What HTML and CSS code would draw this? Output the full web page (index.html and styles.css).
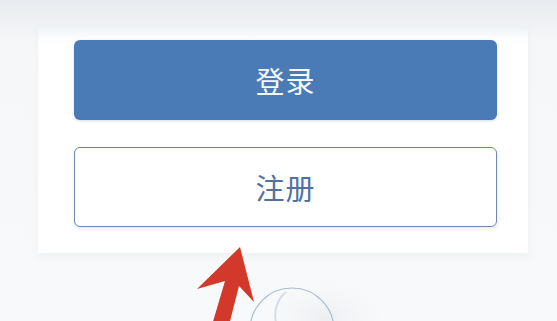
FILE: index.html
```html
<!DOCTYPE html>
<html lang="zh-CN">
<head>
<meta charset="utf-8">
<title>登录</title>
<link rel="stylesheet" href="styles.css">
</head>
<body>
<div class="page">
  <div class="card">
    <button class="btn btn-primary">登录</button>
    <button class="btn btn-outline">注册</button>
  </div>
  <svg class="overlay" width="200" height="90" viewBox="180 240 200 90" aria-hidden="true">
    <defs>
      <radialGradient id="glow" cx="0.5" cy="0.5" r="0.5">
        <stop offset="0" stop-color="#eceef2"/>
        <stop offset="1" stop-color="#f6f7f9" stop-opacity="0"/>
      </radialGradient>
    </defs>
    <ellipse cx="325" cy="318" rx="65" ry="40" fill="url(#glow)"/>
    <circle cx="292" cy="330" r="42" fill="none" stroke="#a9bccd" stroke-width="1.2"/>
    <path d="M286 292 A30 30 0 0 0 276 322" fill="none" stroke="#d6dce3" stroke-width="2"/>
    <polygon points="240,247 254,302 239,286 229,325 212,325 225,281 197,289" fill="#d2392b"/>
  </svg>
</div>
</body>
</html>
```
FILE: styles.css
```css
html, body {
  margin: 0;
  padding: 0;
}
body {
  width: 557px;
  height: 321px;
  overflow: hidden;
  background: linear-gradient(#e8ebef 0, #eef0f3 20px, #f6f7f9 40px, #f8f9fa 100%);
  font-family: "Noto Sans CJK SC", "Noto Sans", sans-serif;
}
.page {
  position: relative;
  width: 557px;
  height: 321px;
  padding-top: 26px;
  box-sizing: border-box;
}
.card {
  margin-left: 38px;
  width: 490px;
  box-sizing: border-box;
  padding: 14px 31px 26px 36px;
  background: linear-gradient(#eef1f4 0, #fbfcfd 12px, #ffffff 20px);
  box-shadow: 0 3px 8px rgba(120, 135, 155, 0.08);
  display: flex;
  flex-direction: column;
  gap: 27px;
}
.btn {
  display: flex;
  align-items: center;
  justify-content: center;
  width: 423px;
  height: 80px;
  box-sizing: border-box;
  border-radius: 6px;
  font-family: "Noto Sans CJK SC", "Noto Sans", sans-serif;
  font-size: 29px;
  font-weight: 400;
  letter-spacing: 1px;
  padding: 0;
}
.btn-primary {
  background: #4a7bb6;
  color: #f4f7fb;
  border: none;
  box-shadow: 0 1px 3px rgba(60, 90, 130, 0.22);
}
.btn-outline {
  background: #ffffff;
  color: #5072a0;
  border: 1.5px solid #6a89ad;
  box-shadow: 1px 2px 4px rgba(90, 110, 140, 0.14);
}
.overlay {
  position: absolute;
  left: 180px;
  top: 240px;
}
```
